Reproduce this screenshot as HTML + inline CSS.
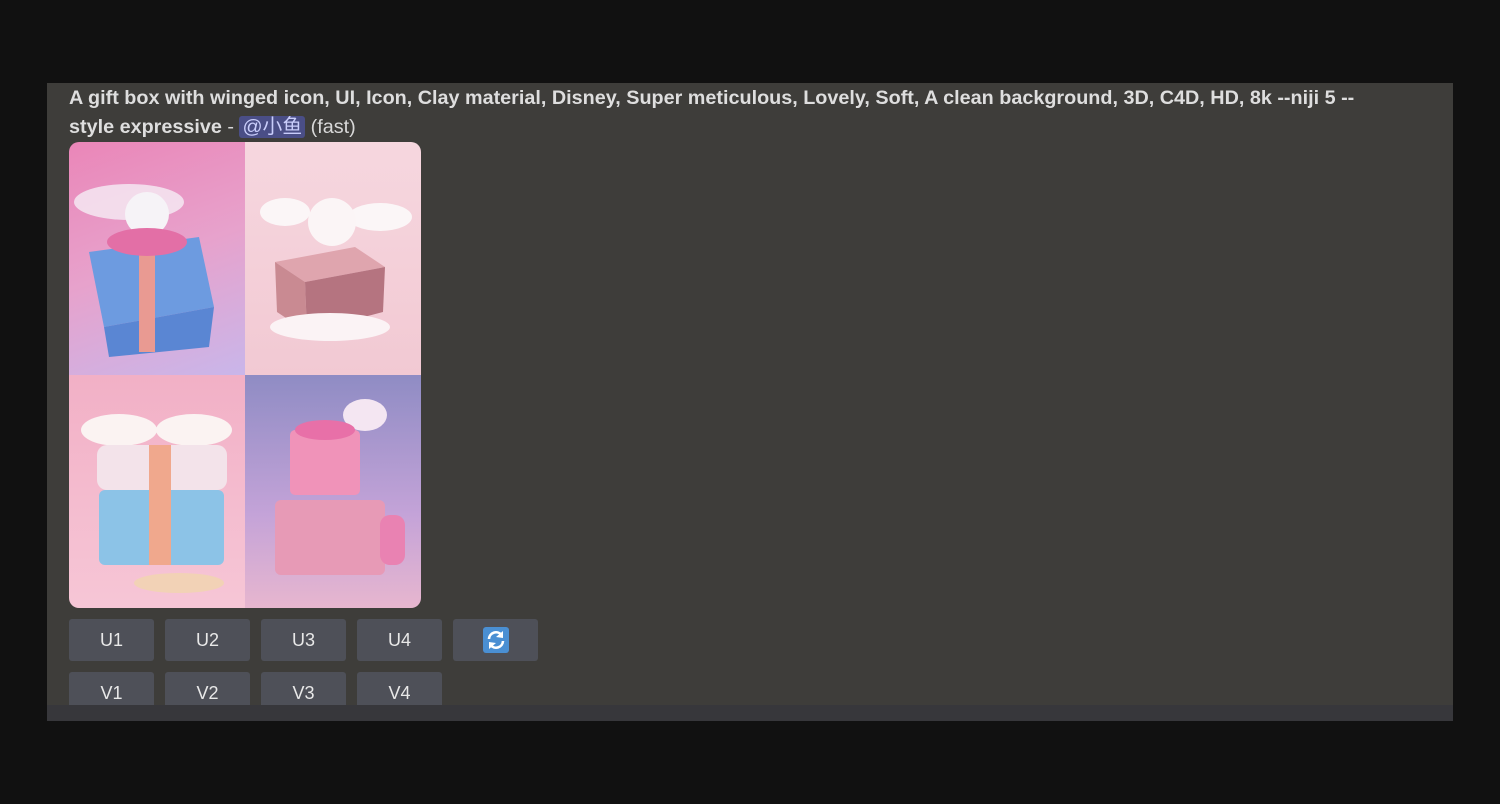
<!DOCTYPE html>
<html><head><meta charset="utf-8"><style>
body{margin:0;width:1500px;height:804px;background:#111111;overflow:hidden;font-family:"Liberation Sans","Noto Sans CJK SC",sans-serif;}
.panel{position:absolute;left:47px;top:83px;width:1406px;height:638px;background:#3e3d3a;overflow:hidden;}
.strip{position:absolute;left:0;top:622px;width:1406px;height:16px;background:#37373b;}
.txt{position:absolute;left:22px;top:1px;width:1360px;color:#dedede;font-size:19.8px;font-weight:bold;line-height:29px;white-space:nowrap;}
.m{background:#4a4e86;color:#c9cdfb;font-weight:normal;border-radius:3px;padding:0 3px;}
.f{font-weight:normal;color:#d8d8d8;}
.img{position:absolute;left:22px;top:59px;width:352px;height:466px;border-radius:10px;overflow:hidden;}
.q{position:absolute;width:176px;height:233px;}
.btn{position:absolute;width:85px;height:42px;background:#4e5058;border-radius:3px;color:#e8e8e8;font-size:18px;text-align:center;line-height:42px;}
</style></head><body>
<div class="panel">
<div class="txt">A gift box with winged icon, UI, Icon, Clay material, Disney, Super meticulous, Lovely, Soft, A clean background, 3D, C4D, HD, 8k --niji 5 --<br>style expressive <span class="f">-</span> <span class="m">@小鱼</span> <span class="f">(fast)</span></div>
<div class="img">
 <div class="q" style="left:0;top:0;background:linear-gradient(160deg,#ea86b8,#e7a2cc 50%,#c9b6ea);">
  <svg width="176" height="233"><ellipse cx="60" cy="60" rx="55" ry="18" fill="#f5eef5" opacity=".8"/><circle cx="78" cy="72" r="22" fill="#f6f3f7"/><polygon points="20,110 130,95 145,165 35,185" fill="#6d9be0"/><polygon points="35,185 145,165 140,205 40,215" fill="#5a86d3"/><rect x="70" y="95" width="16" height="115" fill="#e99a92"/><ellipse cx="78" cy="100" rx="40" ry="14" fill="#e36fa6"/></svg></div>
 <div class="q" style="left:176px;top:0;background:linear-gradient(180deg,#f6d7df,#f2c9d3);">
  <svg width="176" height="233"><ellipse cx="40" cy="70" rx="25" ry="14" fill="#fbf6f7"/><ellipse cx="135" cy="75" rx="32" ry="14" fill="#fbf6f7"/><circle cx="87" cy="80" r="24" fill="#fbf5f6"/><polygon points="30,120 110,105 140,125 60,140" fill="#dfa5ae"/><polygon points="30,120 60,140 62,190 32,170" fill="#c98a92"/><polygon points="60,140 140,125 138,170 62,190" fill="#b57480"/><ellipse cx="85" cy="185" rx="60" ry="14" fill="#fbf3f5"/></svg></div>
 <div class="q" style="left:0;top:233px;background:linear-gradient(180deg,#f2b0c6,#f6c6d6);">
  <svg width="176" height="233"><ellipse cx="50" cy="55" rx="38" ry="16" fill="#fbf3f2"/><ellipse cx="125" cy="55" rx="38" ry="16" fill="#fbf3f2"/><rect x="28" y="70" width="130" height="45" rx="10" fill="#f3e3ea"/><rect x="30" y="115" width="125" height="75" rx="6" fill="#8cc3e7"/><rect x="80" y="70" width="22" height="120" fill="#f0a88d"/><ellipse cx="110" cy="208" rx="45" ry="10" fill="#f2d2b6"/></svg></div>
 <div class="q" style="left:176px;top:233px;background:linear-gradient(180deg,#8f8cc4,#c4a3d8 60%,#e7b6cf);">
  <svg width="176" height="233"><ellipse cx="120" cy="40" rx="22" ry="16" fill="#f4e6f2"/><rect x="45" y="55" width="70" height="65" rx="5" fill="#f093b9"/><rect x="30" y="125" width="110" height="75" rx="6" fill="#e79ab6"/><rect x="135" y="140" width="25" height="50" rx="10" fill="#e982b2"/><ellipse cx="80" cy="55" rx="30" ry="10" fill="#e870a8"/></svg></div>
</div>
<div class="btn" style="left:22px;top:536px">U1</div>
<div class="btn" style="left:118px;top:536px">U2</div>
<div class="btn" style="left:214px;top:536px">U3</div>
<div class="btn" style="left:310px;top:536px">U4</div>
<div class="btn" style="left:406px;top:536px"><svg width="26" height="26" style="vertical-align:middle;margin-top:-3px" viewBox="0 0 26 26"><rect width="26" height="26" rx="3" fill="#4a8fd3"/><path d="M6 12a7 7 0 0 1 12.5-4" stroke="#fff" stroke-width="2.6" fill="none"/><polygon points="20,4 20,11 13,10" fill="#fff"/><path d="M20 14a7 7 0 0 1-12.5 4" stroke="#fff" stroke-width="2.6" fill="none"/><polygon points="6,22 6,15 13,16" fill="#fff"/></svg></div>
<div class="btn" style="left:22px;top:589px">V1</div>
<div class="btn" style="left:118px;top:589px">V2</div>
<div class="btn" style="left:214px;top:589px">V3</div>
<div class="btn" style="left:310px;top:589px">V4</div>
<div class="strip"></div>
</div>
</body></html>
